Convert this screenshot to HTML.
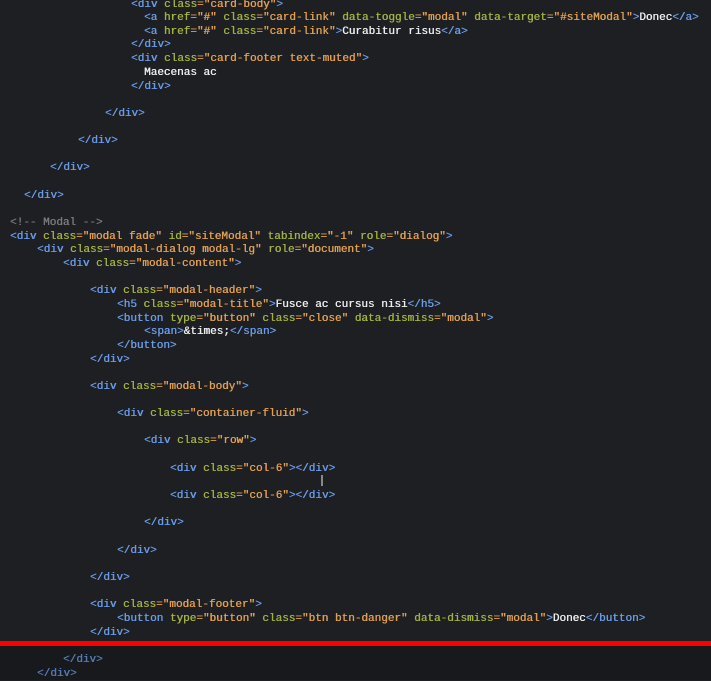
<!DOCTYPE html>
<html><head><meta charset="utf-8"><style>
html,body{margin:0;padding:0;background:#1d1f23;width:711px;height:680px;overflow:hidden}
.l{position:absolute;white-space:pre;font-family:"Liberation Mono",monospace;font-size:11px;line-height:14px;color:#ececec;margin-top:1px;text-shadow:0.4px 0 0 currentColor}
.t{color:#6a9be6}.a{color:#a2b040}.s{color:#e09e50}.c{color:#7a7a7a}
.dim{opacity:.75}
#bar{position:absolute;left:0;top:641px;width:711px;height:5px;background:#f00}
#bot{position:absolute;left:0;top:646px;width:711px;height:34px;background:#17191c}
</style></head><body>
<div id="bot"></div>
<div class="l" style="left:131px;top:-3px"><span class="t">&lt;div</span> <span class="a">class</span><span class="s">="card-body"</span><span class="t">&gt;</span></div>
<div class="l" style="left:144px;top:10px"><span class="t">&lt;a</span> <span class="a">href</span><span class="s">="#"</span> <span class="a">class</span><span class="s">="card-link"</span> <span class="a">data-toggle</span><span class="s">="modal"</span> <span class="a">data-target</span><span class="s">="#siteModal"</span><span class="t">&gt;</span>Donec<span class="t">&lt;/a&gt;</span></div>
<div class="l" style="left:144px;top:24px"><span class="t">&lt;a</span> <span class="a">href</span><span class="s">="#"</span> <span class="a">class</span><span class="s">="card-link"</span><span class="t">&gt;</span>Curabitur risus<span class="t">&lt;/a&gt;</span></div>
<div class="l" style="left:131px;top:37px"><span class="t">&lt;/div&gt;</span></div>
<div class="l" style="left:131px;top:51px"><span class="t">&lt;div</span> <span class="a">class</span><span class="s">="card-footer text-muted"</span><span class="t">&gt;</span></div>
<div class="l" style="left:144px;top:65px">Maecenas ac</div>
<div class="l" style="left:131px;top:79px"><span class="t">&lt;/div&gt;</span></div>
<div class="l" style="left:105px;top:106px"><span class="t">&lt;/div&gt;</span></div>
<div class="l" style="left:78px;top:133px"><span class="t">&lt;/div&gt;</span></div>
<div class="l" style="left:50px;top:160px"><span class="t">&lt;/div&gt;</span></div>
<div class="l" style="left:24px;top:188px"><span class="t">&lt;/div&gt;</span></div>
<div class="l c" style="left:10px;top:215px">&lt;!-- Modal --&gt;</div>
<div class="l" style="left:10px;top:229px"><span class="t">&lt;div</span> <span class="a">class</span><span class="s">="modal fade"</span> <span class="a">id</span><span class="s">="siteModal"</span> <span class="a">tabindex</span><span class="s">="-1"</span> <span class="a">role</span><span class="s">="dialog"</span><span class="t">&gt;</span></div>
<div class="l" style="left:37px;top:242px"><span class="t">&lt;div</span> <span class="a">class</span><span class="s">="modal-dialog modal-lg"</span> <span class="a">role</span><span class="s">="document"</span><span class="t">&gt;</span></div>
<div class="l" style="left:63px;top:256px"><span class="t">&lt;div</span> <span class="a">class</span><span class="s">="modal-content"</span><span class="t">&gt;</span></div>
<div class="l" style="left:90px;top:283px"><span class="t">&lt;div</span> <span class="a">class</span><span class="s">="modal-header"</span><span class="t">&gt;</span></div>
<div class="l" style="left:117px;top:297px"><span class="t">&lt;h5</span> <span class="a">class</span><span class="s">="modal-title"</span><span class="t">&gt;</span>Fusce ac cursus nisi<span class="t">&lt;/h5&gt;</span></div>
<div class="l" style="left:117px;top:311px"><span class="t">&lt;button</span> <span class="a">type</span><span class="s">="button"</span> <span class="a">class</span><span class="s">="close"</span> <span class="a">data-dismiss</span><span class="s">="modal"</span><span class="t">&gt;</span></div>
<div class="l" style="left:144px;top:324px"><span class="t">&lt;span&gt;</span>&amp;times;<span class="t">&lt;/span&gt;</span></div>
<div class="l" style="left:117px;top:338px"><span class="t">&lt;/button&gt;</span></div>
<div class="l" style="left:90px;top:352px"><span class="t">&lt;/div&gt;</span></div>
<div class="l" style="left:90px;top:379px"><span class="t">&lt;div</span> <span class="a">class</span><span class="s">="modal-body"</span><span class="t">&gt;</span></div>
<div class="l" style="left:117px;top:406px"><span class="t">&lt;div</span> <span class="a">class</span><span class="s">="container-fluid"</span><span class="t">&gt;</span></div>
<div class="l" style="left:144px;top:433px"><span class="t">&lt;div</span> <span class="a">class</span><span class="s">="row"</span><span class="t">&gt;</span></div>
<div class="l" style="left:170px;top:461px"><span class="t">&lt;div</span> <span class="a">class</span><span class="s">="col-6"</span><span class="t">&gt;&lt;/div&gt;</span></div>
<div class="l" style="left:170px;top:488px"><span class="t">&lt;div</span> <span class="a">class</span><span class="s">="col-6"</span><span class="t">&gt;&lt;/div&gt;</span></div>
<div class="l" style="left:144px;top:515px"><span class="t">&lt;/div&gt;</span></div>
<div class="l" style="left:117px;top:543px"><span class="t">&lt;/div&gt;</span></div>
<div class="l" style="left:90px;top:570px"><span class="t">&lt;/div&gt;</span></div>
<div class="l" style="left:90px;top:597px"><span class="t">&lt;div</span> <span class="a">class</span><span class="s">="modal-footer"</span><span class="t">&gt;</span></div>
<div class="l" style="left:117px;top:611px"><span class="t">&lt;button</span> <span class="a">type</span><span class="s">="button"</span> <span class="a">class</span><span class="s">="btn btn-danger"</span> <span class="a">data-dismiss</span><span class="s">="modal"</span><span class="t">&gt;</span>Donec<span class="t">&lt;/button&gt;</span></div>
<div class="l" style="left:90px;top:625px"><span class="t">&lt;/div&gt;</span></div>
<div id="bar"></div>
<div class="l dim" style="left:63px;top:652px"><span class="t">&lt;/div&gt;</span></div>
<div class="l dim" style="left:37px;top:666px"><span class="t">&lt;/div&gt;</span></div>
<div style="position:absolute;left:321px;top:475px;width:2px;height:11px;background:#888"></div>
</body></html>
